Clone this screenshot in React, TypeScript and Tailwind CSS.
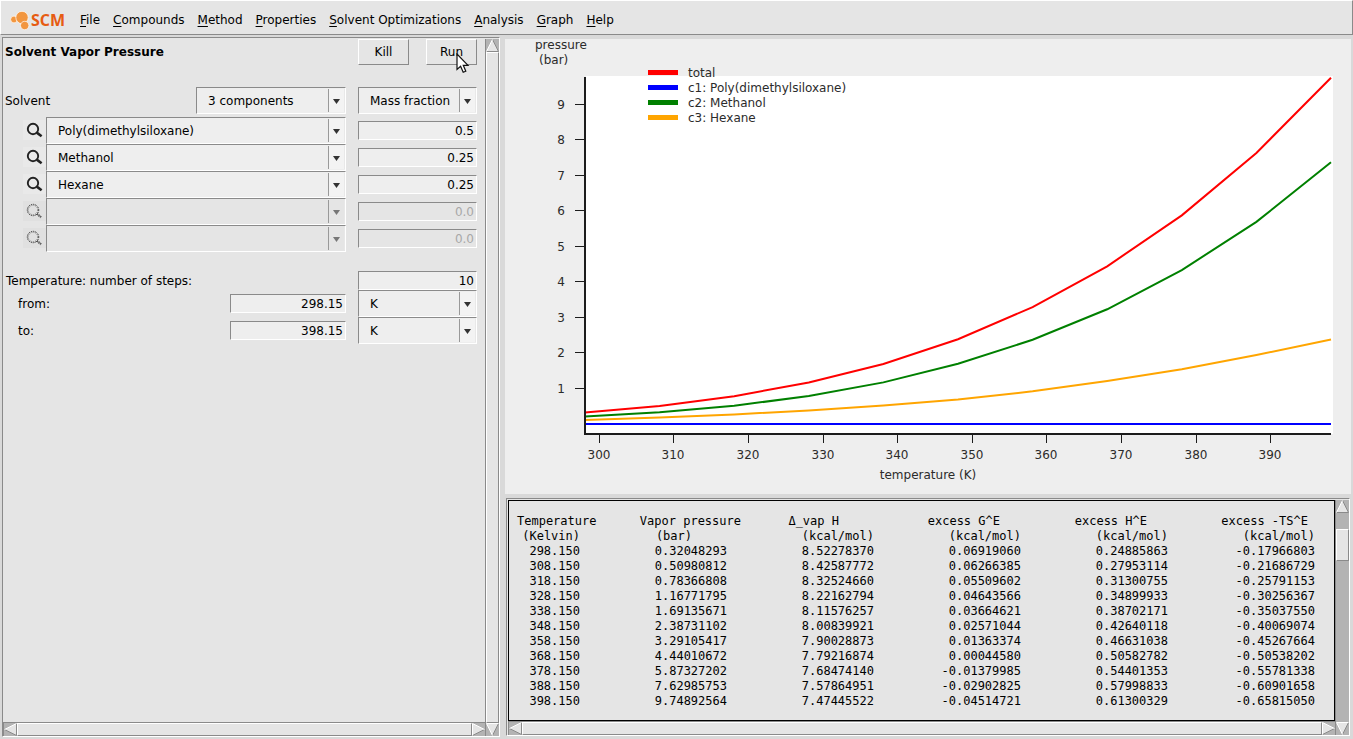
import { useState } from "react";

const menus = [
  "File",
  "Compounds",
  "Method",
  "Properties",
  "Solvent Optimizations",
  "Analysis",
  "Graph",
  "Help",
];

const compounds = ["Poly(dimethylsiloxane)", "Methanol", "Hexane"];

const components = [
  { name: "Poly(dimethylsiloxane)", fraction: "0.5", disabled: false },
  { name: "Methanol", fraction: "0.25", disabled: false },
  { name: "Hexane", fraction: "0.25", disabled: false },
  { name: "", fraction: "0.0", disabled: true },
  { name: "", fraction: "0.0", disabled: true },
];

const headers = [
  { title: "Temperature", unit: "(Kelvin)", titlePad: "", unitPad: "pr-[14px]" },
  { title: "Vapor pressure", unit: "(bar)", titlePad: "", unitPad: "pr-[49px]" },
  { title: "Δ_vap H", unit: "(kcal/mol)", titlePad: "pr-[49px]", unitPad: "pr-[14px]" },
  { title: "excess G^E", unit: "(kcal/mol)", titlePad: "pr-[35px]", unitPad: "pr-[14px]" },
  { title: "excess H^E", unit: "(kcal/mol)", titlePad: "pr-[35px]", unitPad: "pr-[14px]" },
  { title: "excess -TS^E", unit: "(kcal/mol)", titlePad: "pr-[21px]", unitPad: "pr-[14px]" },
];

const rows = [
  ["298.150", "0.32048293", "8.52278370", "0.06919060", "0.24885863", "-0.17966803"],
  ["308.150", "0.50980812", "8.42587772", "0.06266385", "0.27953114", "-0.21686729"],
  ["318.150", "0.78366808", "8.32524660", "0.05509602", "0.31300755", "-0.25791153"],
  ["328.150", "1.16771795", "8.22162794", "0.04643566", "0.34899933", "-0.30256367"],
  ["338.150", "1.69135671", "8.11576257", "0.03664621", "0.38702171", "-0.35037550"],
  ["348.150", "2.38731102", "8.00839921", "0.02571044", "0.42640118", "-0.40069074"],
  ["358.150", "3.29105417", "7.90028873", "0.01363374", "0.46631038", "-0.45267664"],
  ["368.150", "4.44010672", "7.79216874", "0.00044580", "0.50582782", "-0.50538202"],
  ["378.150", "5.87327202", "7.68474140", "-0.01379985", "0.54401353", "-0.55781338"],
  ["388.150", "7.62985753", "7.57864951", "-0.02902825", "0.57998833", "-0.60901658"],
  ["398.150", "9.74892564", "7.47445522", "-0.04514721", "0.61300329", "-0.65815050"],
];

const total = rows.map((row) => Number(row[1]));
const hexane = [0.11, 0.18, 0.27, 0.38, 0.52, 0.69, 0.92, 1.21, 1.54, 1.94, 2.38];
const series = [
  { label: "total", color: "#ff0000", values: total },
  { label: "c1: Poly(dimethylsiloxane)", color: "#0000ff", values: total.map(() => 0) },
  { label: "c2: Methanol", color: "#008000", values: total.map((v, i) => v - hexane[i]) },
  { label: "c3: Hexane", color: "#ffa500", values: hexane },
];

// Chart scales
const px = (t: number) => 80 + (t - 298.15) * 7.46;
const py = (v: number) => 385 - v * 35.52;

const sunken = "border border-t-[#8a8a8a] border-l-[#8a8a8a] border-r-white border-b-white";
const raised = "border border-t-white border-l-white border-r-[#8a8a8a] border-b-[#8a8a8a]";

const Logo = () => (
  <div className="flex items-center w-[58px] mr-3">
    <svg width="21" height="22" viewBox="0 0 21 22" className="shrink-0">
      <g fill="#f2963f" stroke="#fff" strokeWidth="0.7">
        <circle cx="4" cy="10.5" r="3.4" />
        <circle cx="12" cy="8.5" r="6.2" />
        <circle cx="14.7" cy="16.5" r="4.2" />
      </g>
    </svg>
    <span className="font-['Open_Sans',sans-serif] font-bold text-[16px] leading-5 text-[#e65c12]">
      SCM
    </span>
  </div>
);

type SelectProps = {
  label: string;
  value: string;
  options: string[];
  className: string;
  disabled?: boolean;
};

const Select = ({ label, value, options, className, disabled }: SelectProps) => (
  <div className={`relative h-[27px] ${sunken} ${disabled ? "bg-[#e5e5e5]" : "bg-[#eeeeee]"} ${className}`}>
    <select
      aria-label={label}
      defaultValue={value}
      disabled={disabled}
      className="appearance-none w-full h-full pt-[2px] pl-[11px] pr-5 bg-transparent text-black outline-none"
    >
      {options.map((option) => (
        <option key={option}>{option}</option>
      ))}
    </select>
    <div
      className={`pointer-events-none absolute right-0 top-px bottom-px w-[17px] pt-px border-l border-l-[#999999] border-r border-r-[#e8e8e8] flex items-center justify-center ${
        disabled ? "bg-[#e5e5e5]" : "bg-[#f3f3f3]"
      }`}
    >
      <svg width="7" height="5" viewBox="0 0 7 5">
        <path d="M0 0H7L3.5 5Z" fill={disabled ? "#777" : "#333"} />
      </svg>
    </div>
  </div>
);

type FieldProps = { label: string; id?: string; value: string; className: string; disabled?: boolean };

const Field = ({ label, id, value, className, disabled }: FieldProps) => (
  <input
    type="text"
    id={id}
    aria-label={label}
    defaultValue={value}
    disabled={disabled}
    className={`h-[19px] pr-[2px] text-right bg-[#eeeeee] outline-none disabled:bg-[#e5e5e5] disabled:text-[#a8a8a8] ${sunken} ${className}`}
  />
);

const SearchButton = ({ label, disabled }: { label: string; disabled?: boolean }) => (
  <button
    aria-label={label}
    disabled={disabled}
    className="w-[23px] h-5 mb-px shrink-0 bg-[#e9e9e9] disabled:bg-[#e0e0e0]"
  >
    <svg width="23" height="20" viewBox="0 0 23 20">
      {disabled ? (
        <g fill="none" stroke="#222" strokeWidth="1" strokeDasharray="1 1">
          <circle cx="10" cy="9" r="5.7" />
          <circle cx="10" cy="9" r="4.7" strokeOpacity="0.5" />
          <path d="M13.5 13.5L18 17M14.5 12.5L19 16M14 13L18.5 16.5" />
        </g>
      ) : (
        <g fill="none" stroke="#222">
          <circle cx="10" cy="9" r="5.2" strokeWidth="1.9" />
          <path d="M13.8 12.6L18.6 16.2" strokeWidth="2.6" />
        </g>
      )}
    </svg>
  </button>
);

const arrows = {
  up: { face: "M6.5 0.5L12.5 12.5H0.5Z", light: "M0.5 12.5L6.5 0.5", dark: "M6.5 0.5L12.5 12.5H0.5" },
  down: { face: "M0.5 0.5H12.5L6.5 12.5Z", light: "M6.5 12.5L0.5 0.5H12.5", dark: "M12.5 0.5L6.5 12.5" },
  left: { face: "M0.5 6.5L12.5 0.5V12.5Z", light: "M0.5 6.5L12.5 0.5", dark: "M12.5 0.5V12.5L0.5 6.5" },
  right: { face: "M0.5 0.5L12.5 6.5L0.5 12.5Z", light: "M0.5 12.5V0.5L12.5 6.5", dark: "M12.5 6.5L0.5 12.5" },
};

const ArrowButton = ({ dir }: { dir: keyof typeof arrows }) => (
  <button aria-label={`Scroll ${dir}`} className="block shrink-0 w-[13px] h-[13px]">
    <svg width="13" height="13" viewBox="0 0 13 13" fill="none">
      <path d={arrows[dir].face} fill="#e5e5e5" />
      <path d={arrows[dir].dark} stroke="#8a8a8a" />
      <path d={arrows[dir].light} stroke="#fff" />
    </svg>
  </button>
);

const VerticalBar = ({ partial }: { partial?: boolean }) => (
  <div className="flex flex-col w-[14px] shrink-0 bg-[#b3b3b3] border-l border-l-[#8a8a8a]">
    <ArrowButton dir="up" />
    <div className={`flex-1 ${partial ? "pt-4" : ""}`}>
      <div className={`bg-[#e5e5e5] ${raised} ${partial ? "h-8" : "h-full"}`} />
    </div>
    <ArrowButton dir="down" />
  </div>
);

const HorizontalBar = () => (
  <div className="flex h-[14px] shrink-0 bg-[#b3b3b3] border-t border-l border-t-[#8a8a8a] border-l-[#8a8a8a]">
    <ArrowButton dir="left" />
    <div className={`flex-1 bg-[#e5e5e5] ${raised}`} />
    <ArrowButton dir="right" />
  </div>
);

const Chart = () => (
  <svg
    viewBox="0 0 846 455"
    className="block w-full h-auto overflow-visible bg-[#eeeeee] text-[12px]"
    fill="#2b2b2b"
    role="img"
    aria-label="Vapor pressure against temperature"
  >
    <rect x="81" y="37" width="747" height="358" fill="#fff" />
    {series.map((s) => (
      <polyline
        key={s.label}
        points={s.values.map((v, i) => `${px(298.15 + i * 10)},${py(v)}`).join(" ")}
        fill="none"
        stroke={s.color}
        strokeWidth="2"
      />
    ))}
    <rect x="79" y="38" width="2" height="358" fill="#1c1c1c" />
    <rect x="79" y="394" width="747" height="2" fill="#1c1c1c" />
    {[1, 2, 3, 4, 5, 6, 7, 8, 9].map((v) => (
      <g key={v}>
        <rect x="70" y={Math.floor(py(v))} width="9" height="1" fill="#1c1c1c" />
        <text x="60" y={Math.floor(py(v)) + 5} textAnchor="end">
          {v}
        </text>
      </g>
    ))}
    {[300, 310, 320, 330, 340, 350, 360, 370, 380, 390].map((t) => (
      <g key={t}>
        <rect x={Math.round(px(t))} y="396" width="1" height="8" fill="#1c1c1c" />
        <text x={Math.round(px(t))} y="420" textAnchor="middle">
          {t}
        </text>
      </g>
    ))}
    <text x="30" y="10">
      pressure
    </text>
    <text x="34" y="25">
      (bar)
    </text>
    <text x="423" y="440" textAnchor="middle">
      temperature (K)
    </text>
    {series.map((s, i) => (
      <g key={s.label}>
        <rect x="143" y={31 + i * 15} width="30" height="5" fill={s.color} />
        <text x="183" y={38 + i * 15}>
          {s.label}
        </text>
      </g>
    ))}
  </svg>
);

const Pointer = () => (
  <svg
    width="14"
    height="22"
    viewBox="0 0 14 22"
    className="pointer-events-none absolute left-[30px] top-[14px] z-10"
  >
    <path
      d="M1 1V16.5L4.6 13.2L7.2 19.3L9.8 18.2L7.3 12.3H12Z"
      fill="#fff"
      stroke="#111"
      strokeWidth="1.2"
    />
  </svg>
);

const App = () => {
  const [steps, setSteps] = useState("10");

  return (
    <div className="min-h-screen flex flex-col bg-[#d9d9d9] text-black text-[12px] leading-[15px] font-['DejaVu_Sans',sans-serif]">
      {/* Menu bar */}
      <nav className="flex items-center h-[35px] pt-1 pl-[9px] bg-[#e5e5e5] border border-t-white border-l-white border-r-[#8a8a8a] border-b-[#8a8a8a]">
        <Logo />
        <div className="flex gap-[13px] pt-[2px]">
          {menus.map((menu) => (
            <button key={menu} className="whitespace-nowrap">
              <span className="underline underline-offset-2">{menu[0]}</span>
              {menu.slice(1)}
            </button>
          ))}
        </div>
      </nav>

      <div className="flex flex-1 pt-[2px] pl-[2px]">
        {/* Input panel */}
        <section className={`flex w-[498px] shrink-0 mb-[2px] pt-px bg-[#e5e5e5] ${sunken}`}>
          <div className="flex flex-col flex-1">
            <div className="flex-1 pl-[2px] pr-2">
              <div className="flex">
                <h1 className="flex-1 pt-[6px] font-bold">Solvent Vapor Pressure</h1>
                <button className={`w-[51px] h-[26px] mr-[17px] ${raised}`}>Kill</button>
                <div className="relative">
                  <button className={`w-[51px] h-[26px] ${raised}`}>Run</button>
                  <Pointer />
                </div>
              </div>

              <div className="flex items-center mt-[22px]">
                <span className="flex-1 pt-[2px]">Solvent</span>
                <Select
                  label="Number of components"
                  value="3 components"
                  options={["2 components", "3 components", "4 components", "5 components"]}
                  className="w-[150px] mr-3"
                />
                <Select
                  label="Fraction type"
                  value="Mass fraction"
                  options={["Mass fraction", "Mole fraction"]}
                  className="w-[119px]"
                />
              </div>

              <div className="mt-[3px] pl-[18px]">
                {components.map((item, index) => (
                  <div key={index} className="flex items-center">
                    <SearchButton label={`Search solvent ${index + 1}`} disabled={item.disabled} />
                    <Select
                      label={`Solvent ${index + 1}`}
                      value={item.name}
                      options={item.disabled ? [""] : compounds}
                      disabled={item.disabled}
                      className="flex-1 mr-3"
                    />
                    <Field
                      label={`Fraction ${index + 1}`}
                      value={item.fraction}
                      disabled={item.disabled}
                      className="w-[119px]"
                    />
                  </div>
                ))}
              </div>

              <div className="flex items-center mt-[19px]">
                <label htmlFor="steps" className="flex-1 pt-[2px] pl-px">
                  Temperature: number of steps:
                </label>
                <input
                  id="steps"
                  type="text"
                  value={steps}
                  onChange={(e) => setSteps(e.target.value)}
                  className={`w-[119px] h-[19px] pr-[2px] text-right bg-[#eeeeee] outline-none ${sunken}`}
                />
              </div>
              {[
                { id: "from", value: "298.15" },
                { id: "to", value: "398.15" },
              ].map((item) => (
                <div key={item.id} className="flex items-center">
                  <label htmlFor={item.id} className="flex-1 pt-[2px] pl-[13px]">
                    {item.id}:
                  </label>
                  <Field label={item.id} id={item.id} value={item.value} className="w-[116px] mr-3" />
                  <Select
                    label={`Unit ${item.id}`}
                    value="K"
                    options={["K", "C", "F"]}
                    className="w-[119px]"
                  />
                </div>
              ))}
            </div>
            <HorizontalBar />
          </div>
          <VerticalBar />
        </section>

        {/* Results */}
        <main className="flex flex-col flex-1 min-w-0 pt-[2px] pl-[5px] pr-[2px]">
          <Chart />

          <section className={`flex flex-1 mt-1 ml-px mr-px mb-[3px] pt-px pl-px bg-[#e5e5e5] ${sunken}`}>
            <div className="flex flex-col flex-1 min-w-0">
              <div className="flex-1 overflow-hidden border border-black pt-[13px] pl-2">
                <table className="table-fixed w-[812px] text-[12px] leading-[15px] text-right whitespace-nowrap font-['DejaVu_Sans_Mono',monospace]">
                  <colgroup>
                    {headers.map((header, index) => (
                      <col key={header.title} className={index === 0 ? "w-[77px]" : "w-[147px]"} />
                    ))}
                  </colgroup>
                  <thead>
                    <tr>
                      {headers.map((header) => (
                        <th key={header.title} className={`p-0 font-normal ${header.titlePad}`}>
                          {header.title}
                        </th>
                      ))}
                    </tr>
                    <tr>
                      {headers.map((header) => (
                        <th key={header.title} className={`p-0 font-normal ${header.unitPad}`}>
                          {header.unit}
                        </th>
                      ))}
                    </tr>
                  </thead>
                  <tbody>
                    {rows.map((row) => (
                      <tr key={row[0]}>
                        {row.map((cell, index) => (
                          <td key={index} className="p-0 pr-[14px]">
                            {cell}
                          </td>
                        ))}
                      </tr>
                    ))}
                  </tbody>
                </table>
              </div>
              <HorizontalBar />
            </div>
            <VerticalBar partial />
          </section>
        </main>
      </div>
    </div>
  );
};

export default App;
